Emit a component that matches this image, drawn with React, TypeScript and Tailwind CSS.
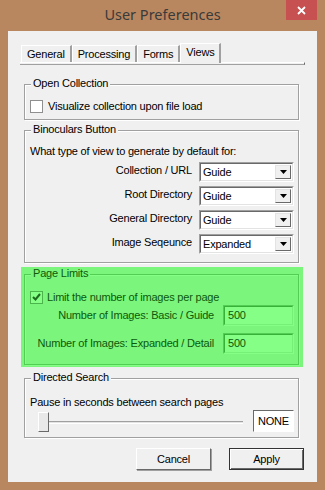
import React from 'react';

/* ---------- SMALL PIECES ---------- */

function GroupBox({
  title,
  green = false,
  className = '',
  children,
}: {
  title: string;
  green?: boolean;
  className?: string;
  children: React.ReactNode;
}) {
  return (
    <div
      className={
        'relative border ' +
        (green
          ? 'border-[#53cd53] shadow-[inset_1px_1px_0_#85ff85,1px_1px_0_#85ff85] '
          : 'border-[#a0a0a0] shadow-[inset_1px_1px_0_#fff,1px_1px_0_#fff] ') +
        className
      }
    >
      <span
        className={
          'absolute -top-[8px] left-[6px] px-[2px] leading-[13px] ' +
          (green ? 'bg-[#7cf57c] text-[#0b5a0b]' : 'bg-[#f0f0f0]')
        }
      >
        {title}
      </span>
      {children}
    </div>
  );
}

function Combo({ value }: { value: string }) {
  return (
    <div className="flex h-[20px] w-[95px] border border-t-[#a0a0a0] border-l-[#a0a0a0] border-r-white border-b-white">
      <div className="flex flex-1 items-center border border-t-[#696969] border-l-[#696969] border-r-[#e3e3e3] border-b-[#e3e3e3] bg-white py-[1px] pr-[1px]">
        <span className="flex-1 pl-[2px] leading-[14px]">{value}</span>
        <div className="flex h-full w-[16px] items-center justify-center border border-t-[#e3e3e3] border-l-[#e3e3e3] border-r-[#696969] border-b-[#696969] bg-[#f0f0f0]">
          <svg width="7" height="4" viewBox="0 0 7 4">
            <path d="M0 0h7L3.5 4z" fill="#000" />
          </svg>
        </div>
      </div>
    </div>
  );
}

function GreenInput({ value }: { value: string }) {
  return (
    <div className="h-[21px] w-[71px] border border-t-[#53cd53] border-l-[#53cd53] border-r-[#85ff85] border-b-[#85ff85]">
      <div className="flex h-full items-center border border-t-[#37b137] border-l-[#37b137] border-r-[#76f076] border-b-[#76f076] bg-[#85ff85] pl-[3px] text-[#0b5a0b]">
        {value}
      </div>
    </div>
  );
}

function Tab({ label, active = false }: { label: string; active?: boolean }) {
  return (
    <div
      className={
        'flex items-center border-l border-t border-l-white border-t-white border-r-2 border-r-[#a0a0a0] bg-[#f0f0f0] ' +
        (active ? 'h-[20px] px-[5px] pb-[3px] -mb-[1px] z-10' : 'h-[17px] px-[5px]')
      }
    >
      {label}
    </div>
  );
}

/* ---------- PAGE ---------- */

export default function App() {
  return (
    <div className="flex h-[490px] w-[325px] flex-col bg-[#b9875f] font-['Liberation_Sans',Arial,sans-serif] text-[11px] tracking-[-0.2px] text-black">
      {/* TITLE BAR */}
      <div className="relative flex h-[31px] items-center justify-center pb-[1px]">
        <span className="font-['Noto_Sans',sans-serif] text-[14.5px] tracking-normal text-[#3a3a3a]">
          User Preferences
        </span>
        <div className="absolute right-[8px] top-0 flex h-[20px] w-[31px] items-center justify-center bg-[#c75050]">
          <svg width="9" height="9" viewBox="0 0 9 9">
            <path d="M1 1l7 7M8 1l-7 7" stroke="#fff" strokeWidth="1.8" />
          </svg>
        </div>
      </div>

      {/* CLIENT */}
      <div className="mx-[8px] flex h-[451px] flex-col bg-[#f0f0f0]">
        {/* TABS */}
        <div className="ml-[13px] mt-[12px] flex h-[19px] items-end">
          <Tab label="General" />
          <Tab label="Processing" />
          <Tab label="Forms" />
          <Tab label="Views" active />
        </div>
        <div className="ml-[12px] h-[3px] w-[285px] border-t border-b border-r border-t-white border-b-[#a0a0a0] border-r-[#696969]" />

        {/* OPEN COLLECTION */}
        <GroupBox title="Open Collection" className="ml-[16px] mt-[19px] h-[36px] w-[275px]">
          <div className="flex items-center gap-[5px] pl-[5px] pt-[13px]">
            <div className="h-[13px] w-[13px] border border-[#8f8f8f] bg-white" />
            <span>Visualize collection upon file load</span>
          </div>
        </GroupBox>

        {/* BINOCULARS */}
        <GroupBox title="Binoculars Button" className="ml-[16px] mt-[10px] h-[133px] w-[275px]">
          <div className="pl-[5px] pt-[14px] leading-[13px]">What type of view to generate by default for:</div>
          <div className="mt-[4px] flex flex-col gap-[4px] pr-[4px]">
            {[
              ['Collection / URL', 'Guide'],
              ['Root Directory', 'Guide'],
              ['General Directory', 'Guide'],
              ['Image Seqeunce', 'Expanded'],
            ].map(([label, value]) => (
              <div key={label} className="flex items-start justify-end gap-[7px]">
                <span className="pt-[2px] leading-[13px]">{label}</span>
                <Combo value={value} />
              </div>
            ))}
          </div>
        </GroupBox>

        {/* PAGE LIMITS (highlighted) */}
        <div className="ml-[13px] mt-[4px] h-[100px] w-[282px] bg-[#7cf57c] pl-[3px] pt-[7px]">
          <GroupBox green title="Page Limits" className="h-[91px] w-[275px]">
            <div className="flex items-center gap-[4px] pl-[5px] pt-[14px] text-[#0b5a0b]">
              <div className="flex h-[13px] w-[13px] items-center justify-center border border-[#4bb54b] bg-[#85ff85]">
                <svg width="9" height="8" viewBox="0 0 9 8">
                  <path d="M1 4l2.5 2.5L8 1" stroke="#1e6b1e" strokeWidth="2" fill="none" />
                </svg>
              </div>
              <span>Limit the number of images per page</span>
            </div>
            <div className="mt-[-1px] flex flex-col gap-[7px] pr-[4px] text-[#0b5a0b]">
              <div className="flex items-center justify-end gap-[9px]">
                <span>Number of Images: Basic / Guide</span>
                <GreenInput value="500" />
              </div>
              <div className="flex items-center justify-end gap-[9px]">
                <span>Number of Images: Expanded / Detail</span>
                <GreenInput value="500" />
              </div>
            </div>
          </GroupBox>
        </div>

        {/* DIRECTED SEARCH */}
        <GroupBox title="Directed Search" className="ml-[16px] mt-[11px] h-[60px] w-[275px]">
          <div className="pl-[5px] pt-[17px] leading-[13px]">Pause in seconds between search pages</div>
          <div className="mt-[3px] flex items-center pl-[13px] pr-[4px]">
            <div className="relative flex h-[20px] w-[205px] items-center">
              <div className="h-[3px] w-full border-t border-b border-t-[#a0a0a0] border-b-white bg-[#e3e3e3]" />
              <div className="absolute left-0 top-0 h-[20px] w-[11px] border border-t-white border-l-white border-r-[#696969] border-b-[#696969] bg-[#e8e8e8]" />
            </div>
            <div className="ml-auto mt-[-2px] flex h-[22px] w-[41px] items-center justify-center border border-t-[#696969] border-l-[#696969] border-r-white border-b-white bg-white">
              NONE
            </div>
          </div>
        </GroupBox>

        {/* BUTTONS */}
        <div className="mt-[10px] flex justify-end gap-[18px] pr-[13px]">
          <button className="h-[22px] w-[75px] border border-t-white border-l-white border-r-[#696969] border-b-[#696969] bg-[#f0f0f0] shadow-[1px_1px_0_#a0a0a0]">
            Cancel
          </button>
          <button className="h-[22px] w-[75px] border border-[#333] bg-[#f0f0f0] shadow-[inset_1px_1px_0_#fff,inset_-1px_-1px_0_#696969]">
            Apply
          </button>
        </div>
      </div>
    </div>
  );
}
